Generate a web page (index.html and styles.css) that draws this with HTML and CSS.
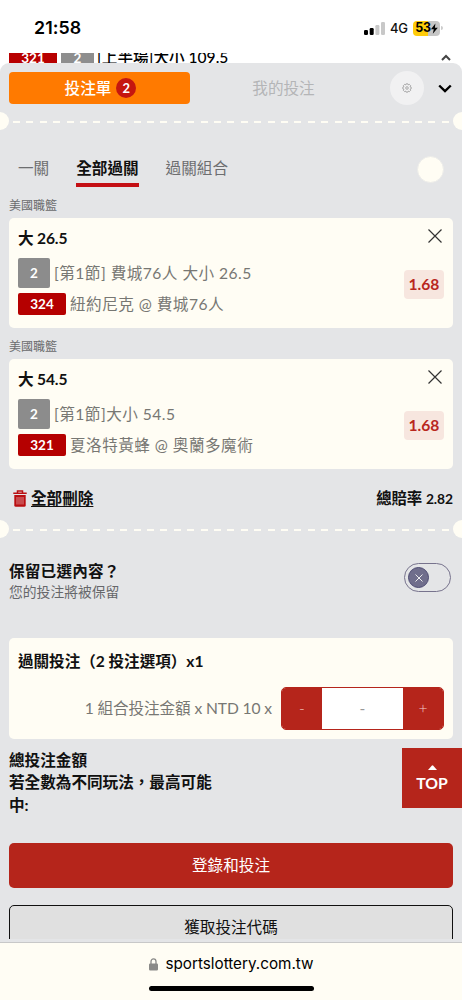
FILE: index.html
```html
<!DOCTYPE html>
<html lang="zh-Hant">
<head>
<meta charset="utf-8">
<meta name="viewport" content="width=device-width, initial-scale=1">
<title>投注單</title>
<link rel="stylesheet" href="styles.css">
</head>
<body>
<div class="phone">
  <header class="status">
    <span class="time">21:58</span>
    <svg class="signal" viewBox="0 0 21 13" width="21" height="13"><rect x="0" y="8" width="4" height="5" rx="1.2"/><rect x="5.7" y="6" width="4" height="7" rx="1.2"/><rect class="dim" x="11.4" y="3" width="4" height="10" rx="1.2"/><rect class="dim" x="17" y="0" width="4" height="13" rx="1.2"/></svg>
    <span class="net">4G</span>
    <span class="battery">53<svg viewBox="0 0 7 11" width="7" height="11"><path d="M4.4.5 0 6.2h2.8L1.8 10.7 6.8 4.7H3.9z"/></svg></span>
    <span class="nub"></span>
  </header>
  <div class="behind">
    <span class="b-red">321</span><span class="b-grey">2</span><span class="b-text">[上半場]大小 109.5</span>
    <svg class="b-up" viewBox="0 0 10 7" width="10" height="7"><path d="M1 6 5 2l4 4"/></svg>
  </div>
  <main class="sheet">
    <div class="head">
      <div class="slip">投注單<span class="count">2</span></div>
      <div class="mine">我的投注</div>
      <div class="gear"><svg viewBox="0 0 10 10" width="10" height="10"><path d="M4.200.800h1.600l.4 1.100 1.200-.5 1.200 1.200-.5 1.200 1.100.400v1.600l-1.100.400.500 1.200-1.200 1.200-1.200-.5-.4 1.100H4.200l-.4-1.100-1.200.5-1.200-1.200.5-1.200-1.100-.4V4.200l1.100-.4-.5-1.200 1.200-1.200 1.200.5z"/><circle cx="5" cy="5" r="1.300"/></svg></div>
      <svg class="down" viewBox="0 0 14 9" width="14" height="9"><path d="m1.200 1.500 5.800 5.500 5.800-5.500"/></svg>
    </div>
    <div class="tear"><i></i><b></b><i class="r"></i></div>
    <nav class="tabs"><span>一關</span><span class="on">全部過關</span><span>過關組合</span><i></i></nav>

    <div class="league">美國職籃</div>
    <section class="card bet">
      <div class="title">大 26.5</div>
      <svg class="close" viewBox="0 0 14 14" width="14" height="14"><path d="m.5.500 13 13m0-13-13 13"/></svg>
      <div class="lines">
        <div class="line"><span class="tag grey">2</span><span>[第1節] 費城76人 大小 26.5</span></div>
        <div class="line second"><span class="tag red">324</span><span>紐約尼克 @ 費城76人</span></div>
      </div>
      <div class="odds">1.68</div>
    </section>
    <div class="league">美國職籃</div>
    <section class="card bet">
      <div class="title">大 54.5</div>
      <svg class="close" viewBox="0 0 14 14" width="14" height="14"><path d="m.5.500 13 13m0-13-13 13"/></svg>
      <div class="lines">
        <div class="line"><span class="tag grey">2</span><span>[第1節]大小 54.5</span></div>
        <div class="line second"><span class="tag red">321</span><span>夏洛特黃蜂 @ 奧蘭多魔術</span></div>
      </div>
      <div class="odds">1.68</div>
    </section>

    <div class="summary">
      <svg viewBox="0 0 14 17" width="14" height="17"><path class="lid" d="M.3 3.200h13.400M4.500 3V1h5v2"/><path class="can" d="M1.300 5h11.400v10.200q0 1.500-1.500 1.500H2.800q-1.500 0-1.500-1.500z"/><path class="slots" d="M4 7v7.500M6 7v7.500M8 7v7.500M10 7v7.500"/></svg>
      <span class="clear">全部刪除</span><span class="total">總賠率 <em>2.82</em></span>
    </div>
    <div class="tear"><i></i><b></b><i class="r"></i></div>

    <div class="keep">
      <div><div class="k1">保留已選內容？</div><div class="k2">您的投注將被保留</div></div>
      <div class="toggle"><span><svg viewBox="0 0 8 8" width="8" height="8"><path d="m.5.500 7 7m0-7-7 7"/></svg></span></div>
    </div>

    <section class="card stake">
      <div class="s-title">過關投注（2 投注選項）x1</div>
      <div class="s-row"><span>1 組合投注金額 x NTD 10 x</span><div class="stepper"><span class="btn">-</span><span class="val">-</span><span class="btn">+</span></div></div>
    </section>
    <div class="sum"><p>總投注金額<br>若全數為不同玩法，最高可能<br>中:</p><div class="top"><svg viewBox="0 0 9 5" width="9" height="5"><path d="M0 5 3.700.700q.8-.8 1.600 0L9 5z"/></svg>TOP</div></div>
    <div class="login">登錄和投注</div>
    <div class="code">獲取投注代碼</div>
  </main>
  <footer class="bar">
    <div class="url"><svg viewBox="0 0 9 13" width="9" height="13"><path class="body" d="M1.200 5.500h6.600q1.200 0 1.200 1.200v4.600q0 1.200-1.200 1.200H1.200Q0 12.500 0 11.300V6.700q0-1.200 1.200-1.200z"/><path class="shackle" d="M2 6V3.500a2.500 2.700 0 0 1 5 0V6"/></svg><span>sportslottery.com.tw</span></div>
    <div class="home"></div>
  </footer>
</div>
</body>
</html>
```
FILE: styles.css
```css
* { box-sizing: border-box; margin: 0; padding: 0; }
body { background: #fff; }
svg { display: block; flex: none; fill: none; stroke: #000; }
.phone {
  width: 462px; height: 1000px; overflow: hidden; display: flex; flex-direction: column;
  font: 15.6px/22px Lato, "Noto Sans CJK TC", sans-serif; color: #111; white-space: nowrap;
}

/* Status bar */
.status { height: 53px; flex: none; display: flex; align-items: center; padding: 3px 18px 0 34px; font-family: Inter, sans-serif; }
.time { font-size: 17.8px; font-weight: 600; width: 330px; color: #000; letter-spacing: .1px; }
.signal { fill: #000; stroke: none; }
.signal .dim { fill: #c8c8c8; }
.net { font-size: 13px; font-weight: 500; margin-left: 5px; width: 19px; letter-spacing: -.2px; }
.battery {
  margin-left: 4px; width: 27px; height: 15px; border-radius: 4px; display: flex; align-items: center; justify-content: center;
  background: linear-gradient(90deg, #ffcc0a 54%, #c6c6c6 54%); font-size: 12.5px; font-weight: 700; letter-spacing: -.2px; color: #000;
}
.battery svg { fill: #000; stroke: none; }
.nub { width: 2px; height: 4px; margin-left: 1px; background: #ccc; border-radius: 0 2px 2px 0; }

/* Page row partly covered by the sheet */
.behind { height: 10px; flex: none; overflow: hidden; display: flex; padding-left: 9px; line-height: 10px; color: #000; }
.b-red, .b-grey { height: 10px; background: #b80000; color: #fff; text-align: center; font-size: 13.5px; font-weight: 700; }
.b-red { width: 48px; }
.b-grey { width: 33px; background: #8e8e8e; margin-left: 4px; }
.b-text { margin-left: 3px; font-size: 15.6px; font-weight: 500; width: 342px; line-height: 9px; }
.b-up { stroke: #444; stroke-width: 2; margin-top: 1px; margin-left: 2px; }

.sheet { height: 876px; flex: none; background: #e4e5e7; border-radius: 9px 9px 0 0; overflow: hidden; }
.head { height: 49px; display: flex; align-items: center; padding-left: 9px; }
.slip { width: 181px; height: 32px; border-radius: 4px; background: #ff7a00; color: #fff; font-weight: 500; display: flex; align-items: center; justify-content: center; gap: 5px; padding-left: 2px; }
.count { width: 20px; height: 20px; border-radius: 50%; background: #c5160f; text-align: center; line-height: 20px; font-size: 13px; font-weight: 700; }
.mine { width: 187px; text-align: center; color: #b4b5b7; }
.gear { width: 34px; height: 34px; margin-left: 13px; border-radius: 50%; background: #f1f1f2; display: flex; align-items: center; justify-content: center; }
.gear svg { stroke: #858585; stroke-width: .65; }
.down { margin: 2px 0 0 14px; stroke-width: 2.4; }

.tear { height: 18px; display: flex; align-items: center; }
.tear i { width: 9px; height: 18px; background: #fffdf4; border-radius: 0 9px 9px 0; }
.tear i.r { border-radius: 9px 0 0 9px; }
.tear b { flex: 1; height: 2px; margin: 2px 4px 0; background: repeating-linear-gradient(90deg, #fffdf4 0 7px, transparent 7px 13.4px); }
.tabs { height: 57px; display: flex; padding: 24px 18px 0; gap: 27px; color: #6d6e70; align-items: flex-start; }
.tabs span { height: 33px; padding-top: 3px; }
.tabs .on { color: #111; font-weight: 700; border-bottom: 4px solid #c40f14; }
.tabs i { width: 27px; height: 27px; border-radius: 50%; background: #fffdf4; margin: 2px 0 0 auto; border: 1px solid #ecece9; }

.league { font-size: 12px; height: 31px; padding: 8px 9px 0; line-height: 21px; color: #6a6b6d; }
.card { margin: 0 9px; background: #fffdf4; border-radius: 5px; }
.bet { height: 110px; display: grid; grid-template-columns: 1fr 40px; grid-template-rows: 40px 62px; padding: 0 9px; }
.title { font-weight: 700; padding-top: 9px; letter-spacing: -.15px; }
.close { margin: 11px 0 0 24px; stroke: #333; stroke-width: 1.2; }
.lines { color: #777773; letter-spacing: .48px; }
.line { height: 30px; display: flex; align-items: center; gap: 4px; }
.line.second { margin-top: 1px; }
.tag { color: #fff; font-weight: 700; font-size: 13.5px; display: flex; align-items: center; justify-content: center; border-radius: 2px; letter-spacing: 0; }
.grey { width: 32px; height: 30px; background: #8c8c8c; }
.red { width: 48px; height: 22px; background: #b50000; }
.odds { height: 29px; margin-top: 12px; border-radius: 4px; background: #f7e6df; color: #b9271e; font-weight: 700; font-size: 15.6px; text-align: center; line-height: 29px; }
.summary { height: 51px; padding: 8px 9px 0 13px; display: flex; align-items: center; font-weight: 700; }
.lid { stroke: #b90f12; stroke-width: 1.5; }
.can { fill: #b90f12; stroke: none; }
.slots { stroke: #e8bfc0; stroke-width: .7; }
.clear { margin: -2px 0 0 4px; text-decoration: underline; text-decoration-thickness: 1px; text-underline-offset: 2px; }
.total { margin-left: auto; font-size: 15.4px; letter-spacing: -.05px; }
.total em { font-style: normal; font-size: 13.8px; }

.keep { height: 100px; padding: 22px 11px 0 9px; display: flex; justify-content: space-between; align-items: flex-start; }
.k1 { font-weight: 700; line-height: 22px; letter-spacing: .2px; }
.k2 { font-size: 13.8px; line-height: 20px; color: #66676a; }
.toggle { width: 47px; height: 29px; margin-top: 3px; border: 1px solid #77738d; border-radius: 15px; padding: 3px; }
.toggle span { width: 21px; height: 21px; border-radius: 50%; background: #706e8c; border: 1px solid #4d4a72; display: flex; align-items: center; justify-content: center; }
.toggle svg { stroke: #eee; stroke-width: 1; }

.stake { height: 101px; padding: 12px 9px 0; }
.s-title { font-weight: 700; letter-spacing: -.04px; }
.s-row { display: flex; align-items: center; justify-content: flex-end; gap: 9px; margin-top: 15px; color: #777773; }
.s-row > span { letter-spacing: -.1px; margin-top: -1px; }
.stepper { width: 163px; height: 43px; display: flex; border: 1px solid #b5251b; border-radius: 5px; overflow: hidden; text-align: center; line-height: 41px; }
.btn { width: 40px; background: #b5251b; color: #f3cdc8; font-weight: 300; }
.val { flex: 1; background: #fff; color: #999; }
.sum { height: 104px; padding: 10px 0 0 9px; display: flex; justify-content: space-between; align-items: flex-start; font-weight: 700; line-height: 22.3px; }
.top { width: 60px; height: 60px; margin-top: -1px; background: #b5251b; color: #fff; display: flex; flex-direction: column; align-items: center; padding-top: 17px; line-height: 26px; font-size: 15.8px; font-weight: 700; letter-spacing: -.1px; }
.top svg { fill: #fff; stroke: none; }
.login { height: 45px; margin: 0 9px; border-radius: 5px; background: #b5251b; color: #fff; text-align: center; line-height: 45px; }
.code { height: 60px; margin: 17px 9px 0; border: 1px solid #111; border-radius: 5px; background: #e0e0e0; text-align: center; line-height: 43px; }

/* Browser bar */
.bar { height: 61px; flex: none; border-top: 3px solid #e4e5e7; background: #fffdf4; box-shadow: inset 0 1px #c8c8c8; display: flex; flex-direction: column; align-items: center; }
.url { height: 44px; display: flex; align-items: center; gap: 7px; padding-left: 1px; font: 15.25px/44px Inter, sans-serif; color: #000; }
.url .body { fill: #8a8a88; stroke: none; }
.url .shackle { stroke: #8a8a88; stroke-width: 1.3; }
.home { width: 165px; height: 5px; border-radius: 3px; background: #000; }
```
